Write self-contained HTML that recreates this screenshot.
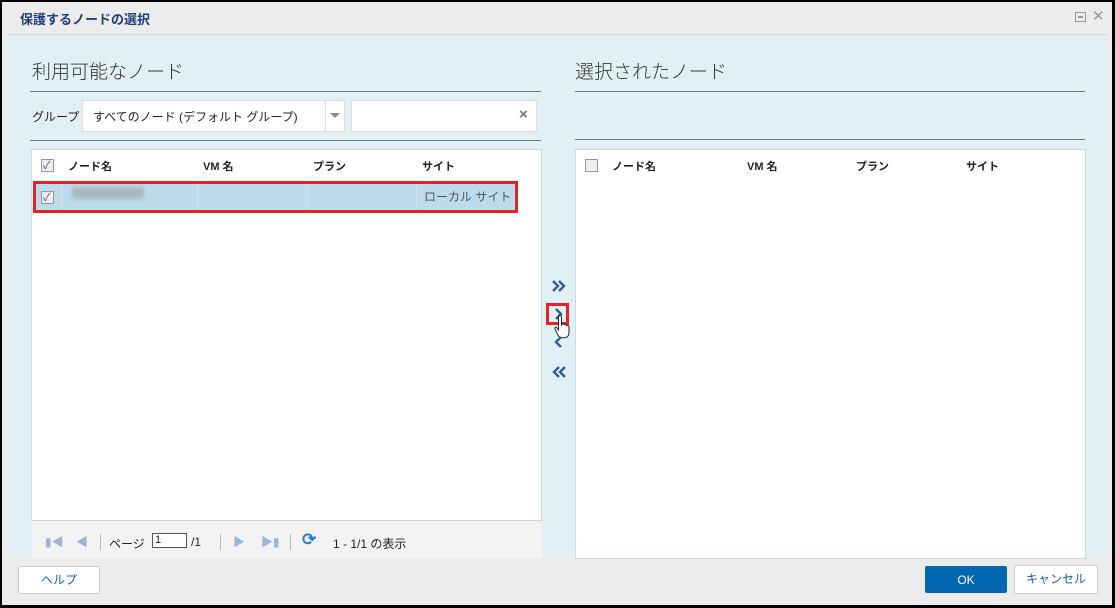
<!DOCTYPE html>
<html><head><meta charset="utf-8"><style>
*{margin:0;padding:0;box-sizing:border-box}
body{width:1115px;height:608px;background:#000;position:relative;overflow:hidden;font-family:"Liberation Sans","Noto Sans CJK JP",sans-serif;font-size:12px;color:#222}
.a{position:absolute}
.win{left:2px;top:2px;width:1110px;height:603px;background:#ececec}
.title{left:20px;top:9px;font-size:13px;font-weight:bold;color:#1f3f7a}
.content{left:8px;top:34px;width:1099px;height:521px;background:#e1f0f4;border-top:1px solid #d0d8dc}
.h{font-size:19px;color:#333;font-weight:300}
.line{height:1px;background:#777}
.grid{background:#fff;border:1px solid #d0d8dc}
.hd{font-size:11px;font-weight:bold;color:#222}
.cb{width:13px;height:13px;border:1px solid #999;background:#eee}
.btn{background:#fff;border:1px solid #ccc;border-radius:2px;text-align:center;line-height:26px;color:#1a5fa8;font-size:12px}
svg.ch{position:absolute;left:551px}
</style></head><body>
<div class="a win"></div>
<div class="a title">保護するノードの選択</div>
<div class="a" style="left:1075px;top:12px;width:11px;height:10px;border:1px solid #999"><div style="margin:3px 2px;height:2px;border-top:1px solid #999;border-bottom:1px solid #999"></div></div>
<div class="a" style="left:1092px;top:7px;color:#999;font-size:15px">✕</div>
<div class="a content"></div>
<div class="a h" style="left:32px;top:57px">利用可能なノード</div>
<div class="a line" style="left:30px;top:91px;width:511px"></div>
<div class="a" style="left:32px;top:108px;font-size:12px">グループ</div>
<div class="a" style="left:82px;top:100px;width:263px;height:32px;background:#fff;border:1px solid #ddd"></div>
<div class="a" style="left:93px;top:108px;font-size:12px">すべてのノード (デフォルト グループ)</div>
<div class="a" style="left:325px;top:101px;width:1px;height:30px;background:#ddd"></div>
<div class="a" style="left:330px;top:113px;border:5px solid transparent;border-top:5px solid #888"></div>
<div class="a" style="left:351px;top:100px;width:186px;height:32px;background:#fff;border:1px solid #ddd"></div>
<div class="a" style="left:519px;top:106px;color:#777;font-size:15px;font-weight:bold">×</div>
<div class="a line" style="left:30px;top:140px;width:511px"></div>
<div class="a grid" style="left:31px;top:149px;width:511px;height:372px"></div>
<div class="a cb" style="left:41px;top:159px"><span style="position:absolute;left:1px;top:-3px;color:#3a5a94;font-size:11px">✓</span></div>
<div class="a hd" style="left:68px;top:158px">ノード名</div>
<div class="a hd" style="left:203px;top:158px">VM 名</div>
<div class="a hd" style="left:313px;top:158px">プラン</div>
<div class="a hd" style="left:422px;top:158px">サイト</div>
<div class="a" style="left:33px;top:181px;width:484px;height:31px;background:#bcdcec"></div>
<div class="a" style="left:61px;top:181px;width:1px;height:31px;background:#dde"></div>
<div class="a" style="left:197px;top:181px;width:1px;height:31px;background:#dde"></div>
<div class="a" style="left:307px;top:181px;width:1px;height:31px;background:#dde"></div>
<div class="a" style="left:416px;top:181px;width:1px;height:31px;background:#dde"></div>
<div class="a" style="left:72px;top:187px;width:72px;height:12px;background:#a9b8c0;border-radius:3px;filter:blur(2px)"></div>
<div class="a cb" style="left:41px;top:191px"><span style="position:absolute;left:1px;top:-3px;color:#3a5a94;font-size:11px">✓</span></div>
<div class="a" style="left:424px;top:188px;color:#555">ローカル サイト</div>
<div class="a" style="left:33px;top:181px;width:485px;height:32px;border:3px solid #e8202a"></div>
<div class="a" style="left:32px;top:521px;width:510px;height:37px;background:#f3f3f3"></div>
<div class="a" style="left:45px;top:533px;color:#9bb4d8;font-size:12px">▮◀</div>
<div class="a" style="left:76px;top:533px;color:#9bb4d8;font-size:12px">◀</div>
<div class="a" style="left:100px;top:534px;width:1px;height:16px;background:#bbb"></div>
<div class="a" style="left:109px;top:535px">ページ</div>
<div class="a" style="left:152px;top:533px;width:35px;height:15px;border:1px solid #555;background:#fff;font-size:11px;padding-left:2px">1</div>
<div class="a" style="left:191px;top:535px">/1</div>
<div class="a" style="left:220px;top:534px;width:1px;height:16px;background:#bbb"></div>
<div class="a" style="left:233px;top:533px;color:#9bb4d8;font-size:12px">▶</div>
<div class="a" style="left:261px;top:533px;color:#9bb4d8;font-size:12px">▶▮</div>
<div class="a" style="left:290px;top:534px;width:1px;height:16px;background:#bbb"></div>
<div class="a" style="left:302px;top:530px;color:#2a7fd0;font-size:17px;font-weight:bold">⟳</div>
<div class="a" style="left:333px;top:535px">1 - 1/1 の表示</div>
<svg class="ch" style="top:278px" width="16" height="16" viewBox="0 0 16 16"><path d="M2 3l5 5-5 5M8 3l5 5-5 5" fill="none" stroke="#3a5a94" stroke-width="2.4"/></svg>
<svg class="ch" style="top:306px" width="16" height="16" viewBox="0 0 16 16"><path d="M5 3l5 5-5 5" fill="none" stroke="#3a5a94" stroke-width="2.4"/></svg>
<div class="a" style="left:546px;top:303px;width:23px;height:22px;border:3px solid #e8202a"></div>
<svg class="a" style="left:553px;top:314px" width="20" height="26" viewBox="0 0 20 26"><path d="M6 2c1-1 2.5 0 2.5 1v8l1-1c1-.5 2 0 2.2.8 1-.5 2 0 2.2.8 1-.4 2.1.2 2.1 1.2v6c0 3-2 5-5 5h-2c-2 0-3-1-4-2.5L2 15c-.6-1 .5-2.3 1.6-1.4L5.5 16V3z" fill="#fff" stroke="#222" stroke-width="1"/></svg>
<svg class="ch" style="top:334px" width="16" height="16" viewBox="0 0 16 16"><path d="M10 3l-5 5 5 5" fill="none" stroke="#3a5a94" stroke-width="2.4"/></svg>
<svg class="ch" style="top:364px" width="16" height="16" viewBox="0 0 16 16"><path d="M8 3l-5 5 5 5M14 3l-5 5 5 5" fill="none" stroke="#3a5a94" stroke-width="2.4"/></svg>
<div class="a h" style="left:575px;top:57px">選択されたノード</div>
<div class="a line" style="left:575px;top:91px;width:510px"></div>
<div class="a line" style="left:575px;top:139px;width:510px"></div>
<div class="a grid" style="left:575px;top:149px;width:511px;height:410px"></div>
<div class="a cb" style="left:585px;top:159px"></div>
<div class="a hd" style="left:612px;top:158px">ノード名</div>
<div class="a hd" style="left:747px;top:158px">VM 名</div>
<div class="a hd" style="left:856px;top:158px">プラン</div>
<div class="a hd" style="left:966px;top:158px">サイト</div>
<div class="a btn" style="left:18px;top:566px;width:82px;height:28px">ヘルプ</div>
<div class="a btn" style="left:925px;top:566px;width:82px;height:27px;background:#0067b0;border-color:#0067b0;color:#fff">OK</div>
<div class="a btn" style="left:1014px;top:565px;width:84px;height:29px">キャンセル</div>
</body></html>
